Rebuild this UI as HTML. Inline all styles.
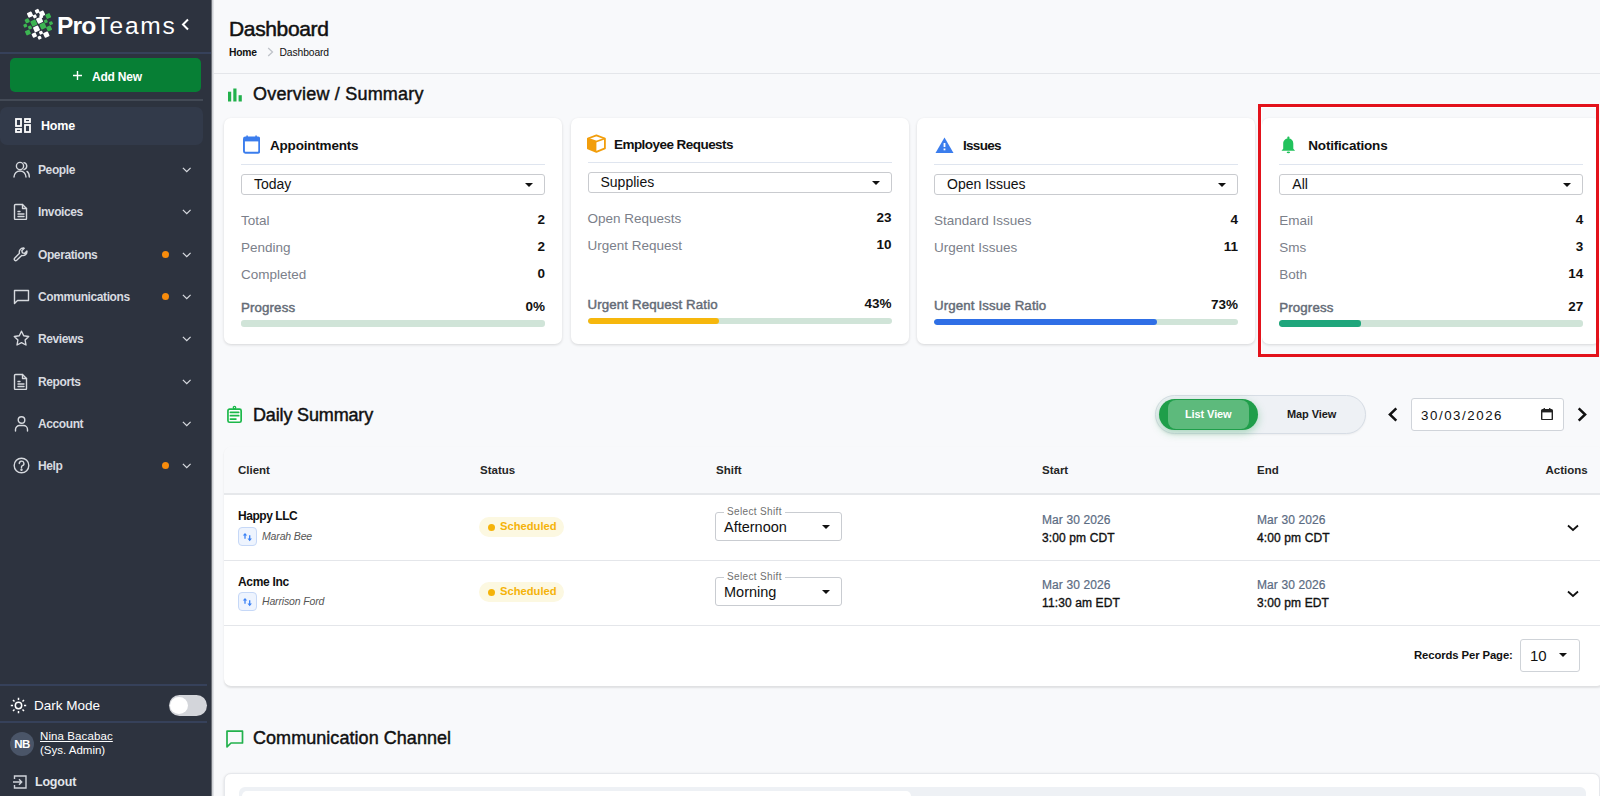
<!DOCTYPE html>
<html><head><meta charset="utf-8">
<style>
*{box-sizing:border-box;margin:0;padding:0}
html,body{width:1600px;height:796px;overflow:hidden}
body{font-family:"Liberation Sans",sans-serif;background:#f8f9fb;position:relative;color:#111}
.abs{position:absolute}
#side{position:absolute;left:0;top:0;width:211px;height:796px;background:#2d333f}
#sideshadow{position:absolute;left:211px;top:0;width:3px;height:796px;background:linear-gradient(90deg,#2a2f37 0,#c9ccd1 40%,#eceef1 100%)}
.sep{position:absolute;height:1.5px;background:#36415a}
.nav{position:absolute;left:0;width:203px;height:36px;color:#d8dbe0;font-size:12px;font-weight:bold;letter-spacing:-0.4px}
.nav .ic{position:absolute;left:13px;top:10px;width:17px;height:17px}
.nav .lb{position:absolute;left:38px;top:12px}
.nav .chev{position:absolute;left:181.5px;top:15.5px;width:9.5px;height:6px}
.nav .dot{position:absolute;left:162px;top:15px;width:7px;height:7px;border-radius:50%;background:#f78c0c}
#main{position:absolute;left:214px;top:0;right:0;bottom:0}
.h2{position:absolute;font-size:18px;color:#111;font-weight:normal;-webkit-text-stroke:0.45px #111;letter-spacing:0.2px}
.card{position:absolute;background:#fff;border-radius:7px;box-shadow:0 1px 3px rgba(0,0,0,.14)}
.ctitle{position:absolute;font-size:13.5px;font-weight:bold;color:#111;letter-spacing:-0.2px;margin-top:0.5px}
.cdiv{position:absolute;height:1.6px;background:#dfe5ef}
.sel{position:absolute;height:21px;border:1px solid #c9cbcf;border-radius:3px;background:#fff}
.sel span{position:absolute;left:12px;top:1px;font-size:14px;color:#111}
.caret{position:absolute;width:0;height:0;border-left:4.5px solid transparent;border-right:4.5px solid transparent;border-top:4.5px solid #111}
.lbl{position:absolute;font-size:13.5px;color:#7b808a;margin-top:1.5px}
.val{position:absolute;font-size:13.5px;font-weight:bold;color:#111;text-align:right;margin-top:1px}
.plbl{position:absolute;font-size:13.3px;color:#646b76;font-weight:normal;-webkit-text-stroke:0.45px #646b76;margin-top:1.5px;letter-spacing:0.12px}
.bar{position:absolute;height:6.6px;border-radius:3px;background:#d0e4d8;overflow:hidden}
.bar i{position:absolute;left:0;top:0;bottom:0;border-radius:3px}
.th{position:absolute;font-size:11.5px;font-weight:bold;color:#262626;margin-top:0px}
.td{position:absolute;font-size:12px}
</style></head><body>
<div id="side">
  <!-- logo -->
  <svg class="abs" style="left:20px;top:6px" width="38" height="38" viewBox="0 0 38 38"><g fill="#fff"><rect x="7.5" y="6.1" width="5" height="5" rx="0.8" transform="rotate(-25 10 8.6)"/><rect x="15.2" y="3.3" width="4" height="4" rx="0.8" transform="rotate(-25 17.2 5.3)"/><rect x="19.5" y="5.1" width="5" height="5" rx="0.8" transform="rotate(-25 22 7.6)"/><rect x="13.1" y="8.7" width="3.4" height="3.4" rx="0.8" transform="rotate(-25 14.8 10.4)"/><rect x="19.5" y="8.8" width="3.4" height="3.4" rx="0.8" transform="rotate(-25 21.2 10.5)"/><rect x="16.8" y="11.5" width="5.6" height="5.6" rx="0.8" transform="rotate(-25 19.6 14.3)"/><rect x="13.7" y="20.1" width="5.6" height="5.6" rx="0.8" transform="rotate(-25 16.5 22.9)"/><rect x="12.1" y="26.9" width="4.4" height="4.4" rx="0.8" transform="rotate(-25 14.3 29.1)"/><rect x="19.3" y="25.0" width="3.4" height="3.4" rx="0.8" transform="rotate(-25 21 26.7)"/><rect x="17.9" y="30.0" width="3.4" height="3.4" rx="0.8" transform="rotate(-25 19.6 31.7)"/><rect x="23.7" y="26.0" width="5.2" height="5.2" rx="0.8" transform="rotate(-25 26.3 28.6)"/></g><g fill="#3db552"><rect x="11.0" y="14.2" width="5.6" height="5.6" rx="0.8" transform="rotate(-25 13.8 17)"/><rect x="20.1" y="17.2" width="5.6" height="5.6" rx="0.8" transform="rotate(-25 22.9 20)"/><rect x="5.1" y="12.7" width="4.2" height="4.2" rx="0.8" transform="rotate(-25 7.2 14.8)"/><rect x="3.6" y="17.9" width="3.4" height="3.4" rx="0.8" transform="rotate(-25 5.3 19.6)"/><rect x="8.3" y="19.8" width="3.4" height="3.4" rx="0.8" transform="rotate(-25 10 21.5)"/><rect x="5.5" y="24.1" width="4.8" height="4.8" rx="0.8" transform="rotate(-25 7.9 26.5)"/><rect x="25.8" y="7.6" width="4.8" height="4.8" rx="0.8" transform="rotate(-25 28.2 10)"/><rect x="24.1" y="13.6" width="3.4" height="3.4" rx="0.8" transform="rotate(-25 25.8 15.3)"/><rect x="29.3" y="15.5" width="3.4" height="3.4" rx="0.8" transform="rotate(-25 31 17.2)"/><rect x="26.7" y="20.0" width="4.8" height="4.8" rx="0.8" transform="rotate(-25 29.1 22.4)"/></g></svg>
  <div class="abs" style="left:57px;top:11.5px;font-size:24.5px;line-height:28px;color:#fff;white-space:nowrap"><b style="letter-spacing:-0.8px">Pro</b><span style="letter-spacing:1.8px">Teams</span></div>
  <svg class="abs" style="left:181px;top:18px" width="9" height="13" viewBox="0 0 9 13"><path d="M7 1.5L2 6.5L7 11.5" stroke="#fff" stroke-width="2" fill="none"/></svg>
  <div class="sep" style="left:0;top:52px;width:211px"></div>
  <div class="abs" style="left:10px;top:58px;width:191px;height:34px;background:#077f35;border-radius:5px;color:#fff;font-size:12.5px;font-weight:bold">
    <svg class="abs" style="left:62.5px;top:13px" width="9" height="9" viewBox="0 0 9 9"><path d="M4.5 0V9M0 4.5H9" stroke="#fff" stroke-width="1.4"/></svg>
    <span class="abs" style="left:82px;top:12px;font-size:12px;letter-spacing:-0.2px">Add New</span>
  </div>
  <div class="sep" style="left:0;top:99px;width:203px;background:#434a56"></div>
  <div class="nav" style="top:106.5px;height:38px;background:#323a4a;border-radius:7px">
    <svg class="ic" style="left:15px;top:11px;width:16px;height:15px" viewBox="0 0 16 15" fill="none" stroke="#fff" stroke-width="1.8">
      <rect x="1" y="1" width="5" height="7"/><rect x="1" y="11" width="5" height="3"/><rect x="10" y="1" width="5" height="3"/><rect x="10" y="7" width="5" height="7"/></svg>
    <span class="lb" style="left:41px;top:12.5px;color:#fff;font-size:12.5px;letter-spacing:-0.2px">Home</span>
  </div>
  <div class="nav" style="top:151px">
  <svg class="ic" style="top:10px" viewBox="0 0 17 17" fill="none" stroke="#d6d9de" stroke-width="1.4" stroke-linejoin="round" stroke-linecap="round"><circle cx="7" cy="5" r="3.6"/><path d="M1 16c0-3.5 2.6-6 6-6s6 2.5 6 6"/><path d="M11 1.6a3.6 3.6 0 0 1 0 7M14 10.4c1.4.9 2.3 2.9 2.3 5.6"/></svg>
  <span class="lb">People</span>
  <svg class="chev" viewBox="0 0 11 7"><path d="M1 1l4.5 4.5L10 1" stroke="#d6d9de" stroke-width="1.5" fill="none"/></svg>
</div>
<div class="nav" style="top:193px">
  <svg class="ic" style="top:10px" viewBox="0 0 17 17" fill="none" stroke="#d6d9de" stroke-width="1.4" stroke-linejoin="round" stroke-linecap="round"><path d="M2.5 1.5h7l4 4v10a1 1 0 0 1-1 1h-10a1 1 0 0 1-1-1v-13a1 1 0 0 1 1-1z"/><path d="M9.5 1.5v4h4M5 8.5h2M5 11h6M5 13.5h6"/></svg>
  <span class="lb">Invoices</span>
  <svg class="chev" viewBox="0 0 11 7"><path d="M1 1l4.5 4.5L10 1" stroke="#d6d9de" stroke-width="1.5" fill="none"/></svg>
</div>
<div class="nav" style="top:236px">
  <svg class="ic" style="top:10px" viewBox="0 0 17 17" fill="none" stroke="#d6d9de" stroke-width="1.4" stroke-linejoin="round" stroke-linecap="round"><path d="M10.5 2a4 4 0 0 0-4 5.2L1.6 12.2a1.5 1.5 0 0 0 2.1 2.1l5-4.9a4 4 0 0 0 5.2-4.4l-2.4 2.4-2.1-.6-.6-2.1 2.4-2.4A4 4 0 0 0 10.5 2z"/></svg>
  <span class="lb">Operations</span>
  <i class="dot"></i>
  <svg class="chev" viewBox="0 0 11 7"><path d="M1 1l4.5 4.5L10 1" stroke="#d6d9de" stroke-width="1.5" fill="none"/></svg>
</div>
<div class="nav" style="top:278px">
  <svg class="ic" style="top:10px" viewBox="0 0 17 17" fill="none" stroke="#d6d9de" stroke-width="1.4" stroke-linejoin="round" stroke-linecap="round"><path d="M1.5 2.5h14v10h-11l-3 3z"/></svg>
  <span class="lb">Communications</span>
  <i class="dot"></i>
  <svg class="chev" viewBox="0 0 11 7"><path d="M1 1l4.5 4.5L10 1" stroke="#d6d9de" stroke-width="1.5" fill="none"/></svg>
</div>
<div class="nav" style="top:320px">
  <svg class="ic" style="top:10px" viewBox="0 0 17 17" fill="none" stroke="#d6d9de" stroke-width="1.4" stroke-linejoin="round" stroke-linecap="round"><path d="M8.5 1.2l2.2 4.6 5 .7-3.6 3.5.9 5-4.5-2.4-4.5 2.4.9-5L1.3 6.5l5-.7z"/></svg>
  <span class="lb">Reviews</span>
  <svg class="chev" viewBox="0 0 11 7"><path d="M1 1l4.5 4.5L10 1" stroke="#d6d9de" stroke-width="1.5" fill="none"/></svg>
</div>
<div class="nav" style="top:363px">
  <svg class="ic" style="top:10px" viewBox="0 0 17 17" fill="none" stroke="#d6d9de" stroke-width="1.4" stroke-linejoin="round" stroke-linecap="round"><path d="M2.5 1.5h7l4 4v10a1 1 0 0 1-1 1h-10a1 1 0 0 1-1-1v-13a1 1 0 0 1 1-1z"/><path d="M9.5 1.5v4h4M5 8.5h2M5 11h6M5 13.5h6"/></svg>
  <span class="lb">Reports</span>
  <svg class="chev" viewBox="0 0 11 7"><path d="M1 1l4.5 4.5L10 1" stroke="#d6d9de" stroke-width="1.5" fill="none"/></svg>
</div>
<div class="nav" style="top:405px">
  <svg class="ic" style="top:10px" viewBox="0 0 17 17" fill="none" stroke="#d6d9de" stroke-width="1.4" stroke-linejoin="round" stroke-linecap="round"><circle cx="8.5" cy="5" r="3.3"/><path d="M2.5 16v-1.5a4 4 0 0 1 4-4h4a4 4 0 0 1 4 4V16"/></svg>
  <span class="lb">Account</span>
  <svg class="chev" viewBox="0 0 11 7"><path d="M1 1l4.5 4.5L10 1" stroke="#d6d9de" stroke-width="1.5" fill="none"/></svg>
</div>
<div class="nav" style="top:447px">
  <svg class="ic" style="top:10px" viewBox="0 0 17 17" fill="none" stroke="#d6d9de" stroke-width="1.4" stroke-linejoin="round" stroke-linecap="round"><circle cx="8.5" cy="8.5" r="7.3"/><path d="M6.3 6.5a2.3 2.3 0 1 1 3.2 2.1c-.7.3-1 .8-1 1.5v.6"/><circle cx="8.5" cy="12.8" r=".5" fill="#d6d9de"/></svg>
  <span class="lb">Help</span>
  <i class="dot"></i>
  <svg class="chev" viewBox="0 0 11 7"><path d="M1 1l4.5 4.5L10 1" stroke="#d6d9de" stroke-width="1.5" fill="none"/></svg>
</div>
  <div class="sep" style="left:0;top:684px;width:207px"></div>
  <svg class="abs" style="left:10px;top:697px" width="17" height="17" viewBox="0 0 17 17" stroke="#fff" stroke-width="1.5" fill="none">
    <circle cx="8.5" cy="8.5" r="3.2"/><path d="M8.5 0.8v2.2M8.5 14v2.2M0.8 8.5h2.2M14 8.5h2.2M3 3l1.5 1.5M12.5 12.5l1.5 1.5M3 14l1.5-1.5M12.5 4.5l1.5-1.5"/></svg>
  <div class="abs" style="left:34px;top:698px;font-size:13.5px;color:#fff">Dark Mode</div>
  <div class="abs" style="left:169px;top:695px;width:38px;height:21px;border-radius:11px;background:#d3d5da">
    <div class="abs" style="left:1px;top:2px;width:18px;height:17px;border-radius:50%;background:#fff"></div></div>
  <div class="sep" style="left:0;top:721px;width:207px"></div>
  <div class="abs" style="left:10px;top:732px;width:24px;height:24px;border-radius:50%;background:#4a5568;color:#fff;font-size:11.5px;font-weight:bold;text-align:center;line-height:24px;letter-spacing:-0.5px">NB</div>
  <div class="abs" style="left:40px;top:730px;font-size:11.5px;color:#fff;text-decoration:underline;letter-spacing:0.1px">Nina Bacabac</div>
  <div class="abs" style="left:40px;top:744px;font-size:11.5px;color:#fff;letter-spacing:0px">(Sys. Admin)</div>
  <svg class="abs" style="left:13px;top:775px" width="14" height="14" viewBox="0 0 14 14" fill="none" stroke="#cfd3da" stroke-width="1.4">
    <path d="M1.5 4V1H13V13H1.5V10"/><path d="M0 7H8.5M6 4.3L8.7 7L6 9.7"/></svg>
  <div class="abs" style="left:35px;top:775px;font-size:12.5px;font-weight:bold;color:#e2e5ea;letter-spacing:-0.2px">Logout</div>
</div>
<div id="sideshadow"></div>

<!-- header -->
<div class="abs" style="left:229px;top:17px;font-size:21px;color:#111;-webkit-text-stroke:0.5px #111;letter-spacing:-0.35px">Dashboard</div>
<div class="abs" style="left:229px;top:46.5px;font-size:10.3px;font-weight:bold;color:#111;letter-spacing:-0.2px">Home</div>
<svg class="abs" style="left:266.5px;top:47px" width="7" height="10" viewBox="0 0 7 10"><path d="M1.2 1L5.5 5L1.2 9" stroke="#bfc3c9" stroke-width="1.3" fill="none"/></svg>
<div class="abs" style="left:279.5px;top:46.5px;font-size:10.3px;color:#111;letter-spacing:-0.1px">Dashboard</div>
<div class="abs" style="left:214px;top:73px;width:1386px;height:1px;background:#e4e6ea"></div>

<!-- overview -->
<svg class="abs" style="left:227.5px;top:88px" width="14" height="14" viewBox="0 0 14 13" fill="#22b14c"><rect x="0" y="3.2" width="3.2" height="9.8"/><rect x="5.3" y="0" width="3.2" height="13"/><rect x="10.6" y="6.7" width="3.2" height="6.3"/></svg>
<div class="h2" style="left:253px;top:84px">Overview / Summary</div>

<div class="card" style="left:224px;top:118px;width:338px;height:226px">
<svg class="abs" style="left:18.5px;top:17px" width="17.2" height="18.7" viewBox="0 0 18 19" preserveAspectRatio="none"><rect x="1" y="2.5" width="16" height="15.5" rx="1.5" fill="none" stroke="#3b7ded" stroke-width="2"/><rect x="1" y="2.5" width="16" height="4" fill="#3b7ded"/><rect x="3.5" y="0.5" width="1.6" height="3" fill="#3b7ded"/><rect x="12.9" y="0.5" width="1.6" height="3" fill="#3b7ded"/></svg>
  <div class="ctitle" style="left:46px;top:19px">Appointments</div>
  <div class="cdiv" style="left:17px;top:45.5px;width:304px"></div>
  <div class="sel" style="left:17px;top:56px;width:304px"><span>Today</span><i class="caret" style="left:283px;top:7.5px"></i></div>
  <div class="lbl" style="left:17px;top:93px">Total</div><div class="val" style="right:17px;top:93px">2</div>
  <div class="lbl" style="left:17px;top:120px">Pending</div><div class="val" style="right:17px;top:120px">2</div>
  <div class="lbl" style="left:17px;top:147px">Completed</div><div class="val" style="right:17px;top:147px">0</div>
  <div class="plbl" style="left:17px;top:180px">Progress</div><div class="val" style="right:17px;top:180px">0%</div>
  <div class="bar" style="left:17px;top:202px;width:304px"></div>
</div>
<div class="card" style="left:570.5px;top:118px;width:338px;height:226px">
<svg class="abs" style="left:16.5px;top:16px" width="20" height="20" viewBox="0 0 20 20"><path d="M9.4 1.3L17.9 4.5V14.4L9.4 17.8L0.9 14.4V4.5Z" fill="#fff" stroke="#f29e0c" stroke-width="1.8" stroke-linejoin="round"/><path d="M0.9 4.5L9.4 7.5V17.8L0.9 14.4Z" fill="#f29e0c"/><path d="M0.9 4.5L9.4 7.5L17.9 4.5" fill="none" stroke="#f29e0c" stroke-width="1.8" stroke-linejoin="round"/></svg>
  <div class="ctitle" style="left:43.5px;top:18.5px;letter-spacing:-0.55px">Employee Requests</div>
  <div class="cdiv" style="left:17px;top:43.5px;width:304px"></div>
  <div class="sel" style="left:17px;top:54px;width:304px"><span>Supplies</span><i class="caret" style="left:283px;top:7.5px"></i></div>
  <div class="lbl" style="left:17px;top:91px">Open Requests</div><div class="val" style="right:17px;top:91px">23</div>
  <div class="lbl" style="left:17px;top:118px">Urgent Request</div><div class="val" style="right:17px;top:118px">10</div>
  <div class="plbl" style="left:17px;top:177px">Urgent Request Ratio</div><div class="val" style="right:17px;top:177px">43%</div>
  <div class="bar" style="left:17px;top:199.5px;width:304px"><i style="width:131px;background:#f6b70d"></i></div>
</div>
<div class="card" style="left:917px;top:118px;width:338px;height:226px">
<svg class="abs" style="left:17.5px;top:18.5px" width="19" height="17" viewBox="0 0 19 17"><path d="M9.5 0.5L18.5 16H0.5Z" fill="#3b7ded"/><rect x="8.6" y="6" width="1.8" height="4" fill="#fff"/><rect x="8.6" y="11.5" width="1.8" height="1.8" fill="#fff"/></svg>
  <div class="ctitle" style="left:46px;top:19px;letter-spacing:-0.7px">Issues</div>
  <div class="cdiv" style="left:17px;top:45.5px;width:304px"></div>
  <div class="sel" style="left:17px;top:56px;width:304px"><span>Open Issues</span><i class="caret" style="left:283px;top:7.5px"></i></div>
  <div class="lbl" style="left:17px;top:93px">Standard Issues</div><div class="val" style="right:17px;top:93px">4</div>
  <div class="lbl" style="left:17px;top:120px">Urgent Issues</div><div class="val" style="right:17px;top:120px">11</div>
  <div class="plbl" style="left:17px;top:178px">Urgent Issue Ratio</div><div class="val" style="right:17px;top:178px">73%</div>
  <div class="bar" style="left:17px;top:200.5px;width:304px"><i style="width:223px;background:#2f6fe6"></i></div>
</div>
<div class="card" style="left:1262.3px;top:118px;width:338px;height:226px">
<svg class="abs" style="left:19px;top:18px" width="16" height="18" viewBox="0 0 16 18" fill="#22c25c"><rect x="6.3" y="0.6" width="2.2" height="2.6" rx="1"/><path d="M2.2 12.8V7.6C2.2 4.6 4.2 2.5 7.4 2.5S12.3 4.6 12.3 7.6V12.8L14.1 14.7H0.5Z"/><ellipse cx="7.4" cy="16.4" rx="1.7" ry="0.8"/></svg>
  <div class="ctitle" style="left:46px;top:19px">Notifications</div>
  <div class="cdiv" style="left:17px;top:45.5px;width:304px"></div>
  <div class="sel" style="left:17px;top:56px;width:304px"><span>All</span><i class="caret" style="left:283px;top:7.5px"></i></div>
  <div class="lbl" style="left:17px;top:93px">Email</div><div class="val" style="right:17px;top:93px">4</div>
  <div class="lbl" style="left:17px;top:120px">Sms</div><div class="val" style="right:17px;top:120px">3</div>
  <div class="lbl" style="left:17px;top:147px">Both</div><div class="val" style="right:17px;top:147px">14</div>
  <div class="plbl" style="left:17px;top:180px">Progress</div><div class="val" style="right:17px;top:180px">27</div>
  <div class="bar" style="left:17px;top:202px;width:304px"><i style="width:82px;background:#1fa67c"></i></div>
</div>

<!-- daily summary -->
<svg class="abs" style="left:226px;top:405px" width="17" height="19" viewBox="0 0 17 19" fill="none" stroke="#1cb84a"><rect x="1.95" y="4.05" width="13.2" height="13.2" rx="1.6" stroke-width="1.7" fill="#fff"/><circle cx="8.5" cy="2.6" r="1.2" stroke-width="1.3"/><path d="M4.4 7.3H12.7M4.4 10.7H12.7M4.4 14.1H9.9" stroke-width="1.7" stroke-linecap="round"/></svg>
<div class="h2" style="left:253px;top:405px;letter-spacing:-0.15px">Daily Summary</div>

<div class="abs" style="left:1155px;top:395px;width:211px;height:39px;border-radius:20px;background:#eef1f5;border:1px solid #d7dde5;box-shadow:0 1px 2px rgba(0,0,0,.05)"></div>
<div class="abs" style="left:1159px;top:399px;width:99px;height:31px;border-radius:16px;background:#1f9e4a;box-shadow:0 3px 8px rgba(34,160,80,.35)"></div>
<div class="abs" style="left:1168px;top:400px;width:81px;height:29px;border-radius:8px;background:#5dba7c"></div>
<div class="abs" style="left:1185px;top:408px;font-size:11px;font-weight:bold;color:#fff;letter-spacing:-0.1px">List View</div>
<div class="abs" style="left:1287px;top:408px;font-size:11px;font-weight:bold;color:#1a1a1a;letter-spacing:-0.1px">Map View</div>

<svg class="abs" style="left:1387px;top:407px" width="12" height="15" viewBox="0 0 12 15"><path d="M9.3 1.3L2.9 7.5L9.3 13.7" stroke="#111" stroke-width="2.5" fill="none"/></svg>
<div class="abs" style="left:1411px;top:398px;width:153px;height:33px;border:1px solid #d0d4da;border-radius:3px;background:#fff"></div>
<div class="abs" style="left:1421px;top:407px;font-size:13.3px;color:#111;letter-spacing:1.55px;margin-top:1px">30/03/2026</div>
<svg class="abs" style="left:1540.5px;top:407.5px" width="12" height="12.5" viewBox="0 0 12 12.5"><rect x="0.7" y="1.8" width="10.6" height="10" rx="1" fill="none" stroke="#222" stroke-width="1.4"/><rect x="0.7" y="1.8" width="10.6" height="2.6" fill="#222"/><rect x="2.6" y="0" width="1.3" height="2.5" fill="#222"/><rect x="8.1" y="0" width="1.3" height="2.5" fill="#222"/></svg>
<svg class="abs" style="left:1576px;top:407px" width="12" height="15" viewBox="0 0 12 15"><path d="M2.7 1.3L9.1 7.5L2.7 13.7" stroke="#111" stroke-width="2.5" fill="none"/></svg>

<div class="card" style="left:224px;top:447px;width:1380px;height:239px;overflow:hidden;box-shadow:0 1.5px 2px rgba(0,0,0,.10),0 0 0.5px rgba(0,0,0,.05)">
  <div class="abs" style="left:0;top:0;right:0;height:48px;background:#f8f9fb;border-bottom:2px solid #e6e8eb"></div>
  <div class="th" style="left:14px;top:17px">Client</div>
  <div class="th" style="left:256px;top:17px">Status</div>
  <div class="th" style="left:492px;top:17px">Shift</div>
  <div class="th" style="left:818px;top:17px">Start</div>
  <div class="th" style="left:1033px;top:17px">End</div>
  <div class="th" style="left:1321.5px;top:17px">Actions</div>
  <div class="abs" style="left:0;top:112.5px;right:0;height:1.6px;background:#e4e6ea"></div>
  <div class="abs" style="left:0;top:177.5px;right:0;height:1.6px;background:#e4e6ea"></div>
</div>

<div class="abs" style="left:238px;top:510px;font-size:12px;font-weight:bold;color:#111;letter-spacing:-0.45px;margin-top:-1px">Happy LLC</div>
<div class="abs" style="left:238px;top:527px;width:19px;height:19px;border:1.2px solid #c6d8f7;border-radius:4px;background:#eef4fe"></div>
<svg class="abs" style="left:242px;top:532px" width="11" height="10" viewBox="0 0 11 10"><path d="M3 2.5V6.8M7.7 3.2V7.5" stroke="#3b82f6" stroke-width="1.3"/><path d="M0.8 3.6L3 0.9L5.2 3.6Z M5.5 6.6L7.7 9.3L9.9 6.6Z" fill="#3b82f6"/></svg>
<div class="abs" style="left:262px;top:530px;font-size:10.5px;font-style:italic;color:#555;letter-spacing:-0.15px">Marah Bee</div>
<div class="abs" style="left:479px;top:517px;width:85px;height:20px;border-radius:10px;background:#fcf8e1"></div>
<div class="abs" style="left:487.5px;top:523.5px;width:7px;height:7px;border-radius:50%;background:#f5b30a"></div>
<div class="abs" style="left:500px;top:520px;font-size:11.2px;font-weight:bold;color:#f5b30a;margin-top:0.3px">Scheduled</div>
<div class="abs" style="left:715px;top:512px;width:127px;height:29px;border:1px solid #c9ccd1;border-radius:3px"></div>
<div class="abs" style="left:724px;top:506px;padding:0 3px;background:#fff;font-size:10px;color:#6f6f6f;letter-spacing:0.35px">Select Shift</div>
<div class="abs" style="left:724px;top:519px;font-size:14.5px;color:#111">Afternoon</div>
<i class="caret" style="left:822px;top:525px"></i>
<div class="abs" style="left:1042px;top:513px;font-size:12px;color:#5b6b82;-webkit-text-stroke:0.2px #5b6b82;letter-spacing:0.1px">Mar 30 2026</div>
<div class="abs" style="left:1042px;top:530px;font-size:12px;color:#111;-webkit-text-stroke:0.35px #111;letter-spacing:0.12px;margin-top:1px">3:00 pm CDT</div>
<div class="abs" style="left:1257px;top:513px;font-size:12px;color:#5b6b82;-webkit-text-stroke:0.2px #5b6b82;letter-spacing:0.1px">Mar 30 2026</div>
<div class="abs" style="left:1257px;top:530px;font-size:12px;color:#111;-webkit-text-stroke:0.35px #111;letter-spacing:0.12px;margin-top:1px">4:00 pm CDT</div>
<svg class="abs" style="left:1566.5px;top:524px" width="12" height="8" viewBox="0 0 12 8"><path d="M1 1.5l5 4.5 5-4.5" stroke="#111" stroke-width="1.8" fill="none"/></svg>

<div class="abs" style="left:238px;top:575px;font-size:12px;font-weight:bold;color:#111;letter-spacing:-0.3px;margin-top:0px">Acme Inc</div>
<div class="abs" style="left:238px;top:592px;width:19px;height:19px;border:1.2px solid #c6d8f7;border-radius:4px;background:#eef4fe"></div>
<svg class="abs" style="left:242px;top:597px" width="11" height="10" viewBox="0 0 11 10"><path d="M3 2.5V6.8M7.7 3.2V7.5" stroke="#3b82f6" stroke-width="1.3"/><path d="M0.8 3.6L3 0.9L5.2 3.6Z M5.5 6.6L7.7 9.3L9.9 6.6Z" fill="#3b82f6"/></svg>
<div class="abs" style="left:262px;top:595px;font-size:10.5px;font-style:italic;color:#555;letter-spacing:-0.15px">Harrison Ford</div>
<div class="abs" style="left:479px;top:582px;width:85px;height:20px;border-radius:10px;background:#fcf8e1"></div>
<div class="abs" style="left:487.5px;top:588.5px;width:7px;height:7px;border-radius:50%;background:#f5b30a"></div>
<div class="abs" style="left:500px;top:585px;font-size:11.2px;font-weight:bold;color:#f5b30a;margin-top:0.3px">Scheduled</div>
<div class="abs" style="left:715px;top:577px;width:127px;height:29px;border:1px solid #c9ccd1;border-radius:3px"></div>
<div class="abs" style="left:724px;top:571px;padding:0 3px;background:#fff;font-size:10px;color:#6f6f6f;letter-spacing:0.35px">Select Shift</div>
<div class="abs" style="left:724px;top:584px;font-size:14.5px;color:#111">Morning</div>
<i class="caret" style="left:822px;top:590px"></i>
<div class="abs" style="left:1042px;top:578px;font-size:12px;color:#5b6b82;-webkit-text-stroke:0.2px #5b6b82;letter-spacing:0.1px">Mar 30 2026</div>
<div class="abs" style="left:1042px;top:595px;font-size:12px;color:#111;-webkit-text-stroke:0.35px #111;letter-spacing:0.12px;margin-top:1px">11:30 am EDT</div>
<div class="abs" style="left:1257px;top:578px;font-size:12px;color:#5b6b82;-webkit-text-stroke:0.2px #5b6b82;letter-spacing:0.1px">Mar 30 2026</div>
<div class="abs" style="left:1257px;top:595px;font-size:12px;color:#111;-webkit-text-stroke:0.35px #111;letter-spacing:0.12px;margin-top:1px">3:00 pm EDT</div>
<svg class="abs" style="left:1566.5px;top:589.5px" width="12" height="8" viewBox="0 0 12 8"><path d="M1 1.5l5 4.5 5-4.5" stroke="#111" stroke-width="1.8" fill="none"/></svg>

<div class="abs" style="left:1414px;top:648px;font-size:11.3px;font-weight:bold;color:#111;letter-spacing:-0.1px;margin-top:1px">Records Per Page:</div>
<div class="abs" style="left:1520px;top:639px;width:60px;height:33px;border:1px solid #cfd3d8;border-radius:3px;background:#fff"></div>
<div class="abs" style="left:1530px;top:647px;font-size:15px;color:#111">10</div>
<i class="caret" style="left:1559px;top:653px"></i>

<!-- communication channel -->
<svg class="abs" style="left:226px;top:730px" width="18" height="18" viewBox="0 0 18 18" fill="none" stroke="#22b14c" stroke-width="1.7" stroke-linejoin="round"><path d="M1 1.2H16.5V13H5L1 16.8Z"/></svg>
<div class="h2" style="left:253px;top:728px;letter-spacing:0.05px">Communication Channel</div>
<div class="card" style="left:224px;top:773px;width:1376px;height:40px;border-radius:7px 7px 0 0;border:1px solid #e6e8ec"></div>
<div class="abs" style="left:239px;top:787px;width:1347px;height:20px;border-radius:6px;background:#eef1f5"></div>
<div class="abs" style="left:242px;top:790.5px;width:669px;height:20px;border-radius:5px;background:#fff"></div>
<div class="abs" style="left:1258px;top:104px;width:341px;height:253px;border:3px solid #e3121b"><div class="abs" style="left:0;top:0;right:0;bottom:0;border:1px solid #fff;border-right:0;border-bottom:0"></div></div>
</body></html>
